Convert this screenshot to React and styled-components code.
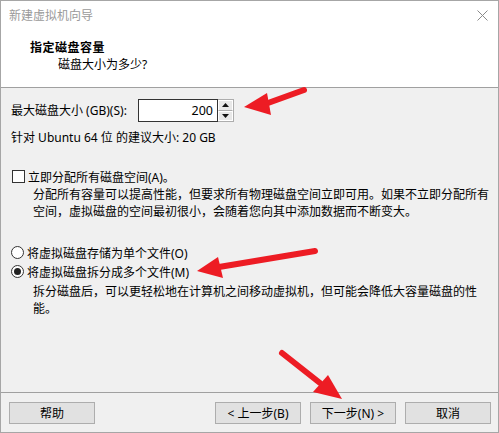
import React from 'react'
import styled, { createGlobalStyle } from 'styled-components'

const GlobalStyle = createGlobalStyle`
  html, body {
    margin: 0;
    padding: 0;
    background: #ffffff;
  }
  * {
    box-sizing: border-box;
  }
`

const FONT = `"Noto Sans", "Noto Sans CJK SC", "Liberation Sans", sans-serif`

const Window = styled.div`
  position: relative;
  width: 499px;
  height: 433px;
  border: 1px solid #a6a6a6;
  display: flex;
  flex-direction: column;
  font-family: ${FONT};
  font-size: 12px;
  color: #000;
  background: #f0f0f0;
  overflow: hidden;
`

const Header = styled.div`
  height: 87px;
  background: #fff;
  border-bottom: 1px solid #a0a0a0;
  display: flex;
  flex-direction: column;
`

const TitleBar = styled.div`
  height: 29px;
  display: flex;
  align-items: center;
  justify-content: space-between;
  padding: 0 10px 0 8px;
  color: #9a9a9a;
  line-height: 17px;
`

const CloseIcon = () => (
  <svg width="11" height="11" viewBox="0 0 11 11">
    <path d="M0.5 0.5 L10.5 10.5 M10.5 0.5 L0.5 10.5" stroke="#8a8a8a" strokeWidth="1" fill="none" />
  </svg>
)

const HeaderTitle = styled.div`
  margin: 9px 0 0 29px;
  font-weight: 700;
  line-height: 17px;
  letter-spacing: 0.5px;
`

const HeaderSub = styled.div`
  margin: 0 0 0 57px;
  line-height: 17px;
`

const Body = styled.div`
  flex: 1;
  display: flex;
  flex-direction: column;
  padding: 0 10px;
`

const SizeRow = styled.div`
  margin-top: 11px;
  display: flex;
  align-items: center;
  height: 23px;
`

const Label = styled.span`
  line-height: 17px;
  width: 127px;
`

const NumberBox = styled.div`
  width: 80px;
  height: 23px;
  border: 1px solid #333;
  background: #fff;
  display: flex;
  align-items: center;
  justify-content: flex-end;
  padding-right: 4px;
  font-size: 12.5px;
`

const Spinner = styled.div`
  width: 16px;
  height: 23px;
  border: 1px solid #adadad;
  border-left: none;
  display: flex;
  flex-direction: column;
  background: #f0f0f0;
`

const SpinHalf = styled.div`
  flex: 1;
  display: flex;
  align-items: center;
  justify-content: center;
  background: #e8e8e8;
  border: 1px solid #fff;
  border-bottom: ${p => (p.top ? '1px solid #adadad' : '1px solid #fff')};
`

const Tri = ({ up }) => (
  <svg width="7" height="4" viewBox="0 0 7 4">
    <path d={up ? 'M0 4 L3.5 0 L7 4 Z' : 'M0 0 L3.5 4 L7 0 Z'} fill="#111" />
  </svg>
)

const Line = styled.div`
  line-height: 17px;
  margin-top: ${p => p.mt || 0}px;
  padding-left: ${p => p.indent || 0}px;
  letter-spacing: ${p => p.spacing || 0}px;
  white-space: nowrap;
`

const OptionRow = styled.div`
  display: flex;
  align-items: center;
  height: 17px;
  margin-top: ${p => p.mt || 0}px;
  gap: 3px;
`

const CheckBox = styled.span`
  width: 13px;
  height: 13px;
  border: 1px solid #333;
  background: #fff;
  margin-left: 1px;
`

const Radio = styled.span`
  width: 13px;
  height: 13px;
  border: 1px solid #333;
  border-radius: 50%;
  background: #fff;
  display: flex;
  align-items: center;
  justify-content: center;
  &::after {
    content: '';
    width: 7px;
    height: 7px;
    border-radius: 50%;
    background: ${p => (p.checked ? '#222' : 'transparent')};
  }
`

const Footer = styled.div`
  height: 40px;
  border-top: 1px solid #a0a0a0;
  display: flex;
  align-items: flex-start;
  padding: 9px 7px 0 8px;
  gap: 9px;
`

const Button = styled.div`
  width: 86px;
  height: 22px;
  border: 1px solid #adadad;
  background: #e1e1e1;
  display: flex;
  align-items: center;
  justify-content: center;
  line-height: 17px;
  margin-left: ${p => (p.push ? 'auto' : '0')};
`

const Overlay = styled.svg`
  position: absolute;
  left: -1px;
  top: -1px;
  pointer-events: none;
`

const RED = '#ed1c24'

const Arrow = ({ tail, base, a, b, tip }) => (
  <g>
    <line x1={tail[0]} y1={tail[1]} x2={base[0]} y2={base[1]} stroke={RED} strokeWidth="6" strokeLinecap="round" />
    <polygon points={`${a[0]},${a[1]} ${tip[0]},${tip[1]} ${b[0]},${b[1]}`} fill={RED} />
  </g>
)

export default function App() {
  return (
    <>
      <GlobalStyle />
      <Window>
        <Header>
          <TitleBar>
            <span>新建虚拟机向导</span>
            <CloseIcon />
          </TitleBar>
          <HeaderTitle>指定磁盘容量</HeaderTitle>
          <HeaderSub>磁盘大小为多少?</HeaderSub>
        </Header>
        <Body>
          <SizeRow>
            <Label>最大磁盘大小 (GB)(S):</Label>
            <NumberBox>200</NumberBox>
            <Spinner>
              <SpinHalf top>
                <Tri up />
              </SpinHalf>
              <SpinHalf>
                <Tri />
              </SpinHalf>
            </Spinner>
          </SizeRow>
          <Line mt={7}>针对 Ubuntu 64 位 的建议大小: 20 GB</Line>
          <OptionRow mt={22}>
            <CheckBox />
            <span>立即分配所有磁盘空间(A)。</span>
          </OptionRow>
          <Line mt={1} indent={22}>
            分配所有容量可以提高性能，但要求所有物理磁盘空间立即可用。如果不立即分配所有
            <br />
            空间，虚拟磁盘的空间最初很小，会随着您向其中添加数据而不断变大。
          </Line>
          <OptionRow mt={24}>
            <Radio />
            <span>将虚拟磁盘存储为单个文件(O)</span>
          </OptionRow>
          <OptionRow mt={2}>
            <Radio checked />
            <span>将虚拟磁盘拆分成多个文件(M)</span>
          </OptionRow>
          <Line mt={3} indent={22}>
            拆分磁盘后，可以更轻松地在计算机之间移动虚拟机，但可能会降低大容量磁盘的性
            <br />
            能。
          </Line>
        </Body>
        <Footer>
          <Button>帮助</Button>
          <Button push>&lt; 上一步(B)</Button>
          <Button>下一步(N) &gt;</Button>
          <Button>取消</Button>
        </Footer>
        <Overlay width="499" height="433" viewBox="0 0 499 433">
          <Arrow tail={[304, 90]} base={[268, 103]} a={[267, 93]} b={[271, 115]} tip={[244, 107]} />
          <Arrow tail={[315, 251]} base={[219, 267]} a={[218, 257]} b={[223, 278]} tip={[197, 271]} />
          <Arrow tail={[282, 353]} base={[320, 383]} a={[313, 392]} b={[328, 375]} tip={[342, 399]} />
        </Overlay>
      </Window>
    </>
  )
}
